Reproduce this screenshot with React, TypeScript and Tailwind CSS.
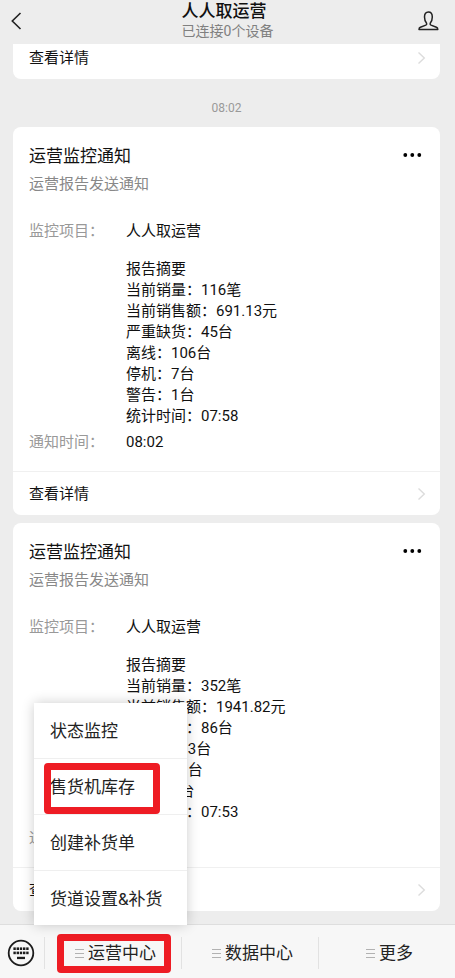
// App.tsx
import React, { useState } from "react";

interface Report {
  id: number;
  lines: string[];
  time: string;
}

interface MenuTab {
  label: string;
  items: string[];
}

const reports: Report[] = [
  {
    id: 1,
    lines: [
      "报告摘要",
      "当前销量：116笔",
      "当前销售额：691.13元",
      "严重缺货：45台",
      "离线：106台",
      "停机：7台",
      "警告：1台",
      "统计时间：07:58",
    ],
    time: "08:02",
  },
  {
    id: 2,
    lines: [
      "报告摘要",
      "当前销量：352笔",
      "当前销售额：1941.82元",
      "严重缺货：86台",
      "离线：113台",
      "停机：11台",
      "警告：1台",
      "统计时间：07:53",
    ],
    time: "07:57",
  },
];

const tabs: MenuTab[] = [
  {
    label: "运营中心",
    items: ["状态监控", "售货机库存", "创建补货单", "货道设置&补货"],
  },
  { label: "数据中心", items: [] },
  { label: "更多", items: [] },
];

const DetailLink = () => (
  <a
    href="#detail"
    className="flex h-11 items-center justify-between border-t border-[#f0f0f0] pr-3 pl-4 text-[15px] text-[#111]"
  >
    <span className="pt-[2px]">查看详情</span>
    <svg width="12" height="16" viewBox="0 0 12 16" fill="none">
      <path d="M2.5 2.5 8.3 8l-5.8 5.5" stroke="#dcdcdc" strokeWidth="1.4" />
    </svg>
  </a>
);

const ReportCard: React.FC<{ report: Report }> = ({ report }) => (
  <article className="shrink-0 rounded-lg bg-white">
    <div className="px-4 pt-[17px] pb-[18px] text-[15px] leading-[21px]">
      <div className="flex items-center justify-between">
        <h2 className="text-[17px] leading-6 text-[#111]">运营监控通知</h2>
        <button type="button" aria-label="更多操作" className="pb-[2px]">
          <svg width="22" height="8" viewBox="0 0 22 8" fill="#000">
            <circle cx="3.3" cy="4" r="1.9" />
            <circle cx="10.3" cy="4" r="1.9" />
            <circle cx="17.3" cy="4" r="1.9" />
          </svg>
        </button>
      </div>
      <p className="mt-[6px] text-[#888]">运营报告发送通知</p>
      <dl className="mt-[26px] grid grid-cols-[97px_1fr] gap-y-1">
        <dt className="text-[#999]">监控项目：</dt>
        <dd className="text-[#111]">
          <p>人人取运营</p>
          <div className="mt-[17px] pb-px">
            {report.lines.map((line) => (
              <p key={line}>{line}</p>
            ))}
          </div>
        </dd>
        <dt className="text-[#999]">通知时间：</dt>
        <dd className="text-[#111]">{report.time}</dd>
      </dl>
    </div>
    <DetailLink />
  </article>
);

const Header = () => (
  <header className="grid h-11 shrink-0 grid-cols-[1fr_auto_1fr] items-center px-2">
    <button
      type="button"
      aria-label="返回"
      className="justify-self-start pb-[2px]"
    >
      <svg width="16" height="20" viewBox="0 0 16 20" fill="none">
        <path d="M12.5 2 4.3 10l8.2 8" stroke="#222" strokeWidth="1.6" />
      </svg>
    </button>
    <div className="pb-1">
      <h1 className="text-[17px] leading-[22px] font-medium text-[#111]">
        人人取运营
      </h1>
      <p className="text-sm leading-[18px] text-[#808080]">已连接0个设备</p>
    </div>
    <button
      type="button"
      aria-label="账号信息"
      className="justify-self-end pr-2 pb-[2px]"
    >
      <svg width="22" height="22" viewBox="0 0 22 22" fill="none">
        <path
          d="M9.6 13.2C8.2 11.6 7.5 9.4 7.5 6.9c0-3 1.4-4.9 3.9-4.9s3.9 1.9 3.9 4.9c0 2.5-.7 4.7-2.1 6.3-.3 1 0 1.5.8 1.9l5.4 2.2c1 .4 1.4.9 1.4 2.2H2c0-1.3.4-1.8 1.4-2.2l5.4-2.2c.8-.4 1.1-.9.8-1.9Z"
          stroke="#222"
          strokeWidth="1.5"
          strokeLinejoin="round"
        />
      </svg>
    </button>
  </header>
);

const KeyboardIcon = () => (
  <svg width="28" height="28" viewBox="0 0 28 28" fill="none">
    <circle cx="14" cy="14" r="12.3" stroke="#1c1c1c" strokeWidth="1.8" />
    {[6.4, 9.6, 12.8, 16, 19.2].map((x) => (
      <g key={x} fill="#1c1c1c">
        <rect x={x} y="8.4" width="2.4" height="2.6" />
        <rect x={x} y="12.6" width="2.4" height="2.6" />
      </g>
    ))}
    <rect x="10" y="17.8" width="8" height="2.3" fill="#1c1c1c" />
  </svg>
);

const App: React.FC = () => {
  const [openTab, setOpenTab] = useState<string | null>("运营中心");

  return (
    <div
      lang="zh-CN"
      className="flex h-screen flex-col bg-[#ededed] font-[Roboto,'Noto_Sans_CJK_SC',sans-serif]"
    >
      <Header />

      <main className="flex min-h-0 flex-1 flex-col justify-end overflow-hidden pr-[15px] pb-[13px] pl-[13px]">
        <div className="shrink-0 rounded-b-lg bg-white">
          <DetailLink />
        </div>
        <time className="flex h-12 shrink-0 items-center justify-center pt-[10px] text-xs text-[#999]">
          08:02
        </time>
        <div className="flex shrink-0 flex-col gap-2">
          {reports.map((report) => (
            <ReportCard key={report.id} report={report} />
          ))}
        </div>
      </main>

      <footer className="flex h-[54px] shrink-0 items-stretch border-t border-[#dedede] bg-[#f7f7f7]">
        <button
          type="button"
          aria-label="切换键盘"
          className="flex w-11 items-center justify-center pt-[2px] pr-[2px]"
        >
          <KeyboardIcon />
        </button>
        {tabs.map((tab) => (
          <div key={tab.label} className="relative flex flex-1 items-center">
            <span className="mt-[2px] h-8 w-px bg-[#e2e2e2]" />
            <button
              type="button"
              onClick={() =>
                setOpenTab(openTab === tab.label ? null : tab.label)
              }
              className="flex h-full flex-1 items-center justify-center gap-1 pt-1 pl-[5px] text-[17px] text-[#222]"
            >
              <svg width="9" height="9" viewBox="0 0 9 9" stroke="#b2b2b2">
                <path d="M0 .5h9M0 4.5h9M0 8.5h9" />
              </svg>
              {tab.label}
            </button>
            {openTab === tab.label && tab.items.length > 0 && (
              <>
                <span className="pointer-events-none absolute top-[9px] left-[13px] h-[39px] w-[114px] rounded border-[7px] border-[#ee1c24]" />
                <ul className="absolute bottom-full -left-[10px] w-[153px] bg-white text-[17px] text-[#222] shadow-[0_0_12px_rgba(0,0,0,0.2)]">
                  {tab.items.map((item) => (
                    <li
                      key={item}
                      className="relative h-14 border-b border-[#efefef] last:h-[54px] last:border-b-0"
                    >
                      <button
                        type="button"
                        className="h-full w-full pt-[3px] pl-4 text-left"
                      >
                        {item}
                      </button>
                      {item === "售货机库存" && (
                        <span className="pointer-events-none absolute top-1 left-[10px] h-[51px] w-[116px] rounded border-[7px] border-[#ee1c24]" />
                      )}
                    </li>
                  ))}
                </ul>
              </>
            )}
          </div>
        ))}
      </footer>
    </div>
  );
};

export default App;
